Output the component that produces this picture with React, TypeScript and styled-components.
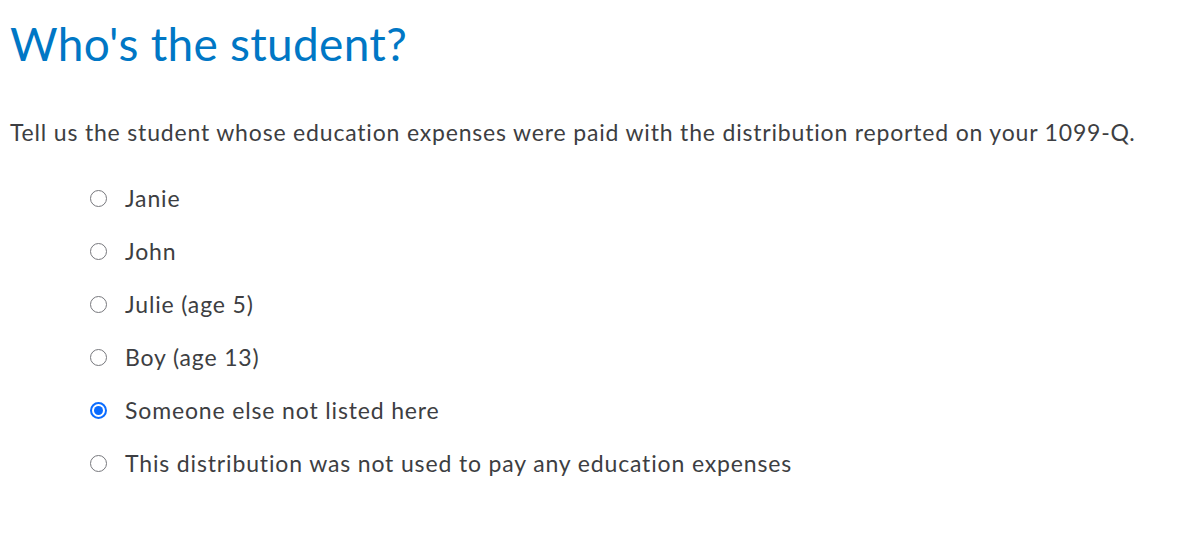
import { FC, useState } from 'react'
import styled, { createGlobalStyle } from 'styled-components'

const GlobalStyle = createGlobalStyle`
  html, body {
    margin: 0;
    padding: 0;
    background: #ffffff;
  }
  body {
    font-family: Lato, "Noto Sans", sans-serif;
    color: #393a3d;
  }
`

const Page = styled.main`
  padding: 14px 10px 0 10px;
`

const Title = styled.h1`
  margin: 0;
  font-size: 46px;
  font-weight: 400;
  line-height: 60px;
  color: #0077c5;
  letter-spacing: 0.3px;
`

const Lead = styled.p`
  margin: 42px 0 0 0;
  font-size: 23px;
  line-height: 32px;
  letter-spacing: 0.82px;
  color: #3d3e42;
`

const Options = styled.fieldset`
  margin: 34px 0 0 0;
  padding: 0 0 0 80px;
  border: none;
  display: flex;
  flex-direction: column;
  gap: 21px;
`

const Option = styled.label`
  display: flex;
  align-items: center;
  gap: 18px;
  height: 32px;
  font-size: 23px;
  letter-spacing: 0.85px;
  color: #3d3e42;
  cursor: pointer;
`

const Radio = styled.span<{ $checked: boolean }>`
  flex: none;
  box-sizing: border-box;
  width: 17px;
  height: 17px;
  border-radius: 50%;
  border: ${p => (p.$checked ? '2px solid #0a6cff' : '1.5px solid #77787d')};
  display: flex;
  align-items: center;
  justify-content: center;

  &::after {
    content: '';
    width: 9px;
    height: 9px;
    border-radius: 50%;
    background: #0a6cff;
    display: ${p => (p.$checked ? 'block' : 'none')};
  }
`

const HiddenInput = styled.input`
  position: absolute;
  opacity: 0;
  width: 0;
  height: 0;
`

const choices = [
  'Janie',
  'John',
  'Julie (age 5)',
  'Boy (age 13)',
  'Someone else not listed here',
  'This distribution was not used to pay any education expenses',
]

const App: FC = () => {
  const [selected, setSelected] = useState(4)
  return (
    <Page>
      <GlobalStyle />
      <Title>Who's the student?</Title>
      <Lead>
        Tell us the student whose education expenses were paid with the
        distribution reported on your 1099-Q.
      </Lead>
      <Options>
        {choices.map((c, i) => (
          <Option key={c}>
            <HiddenInput
              type="radio"
              name="student"
              checked={selected === i}
              onChange={() => setSelected(i)}
            />
            <Radio $checked={selected === i} />
            {c}
          </Option>
        ))}
      </Options>
    </Page>
  )
}

export default App
